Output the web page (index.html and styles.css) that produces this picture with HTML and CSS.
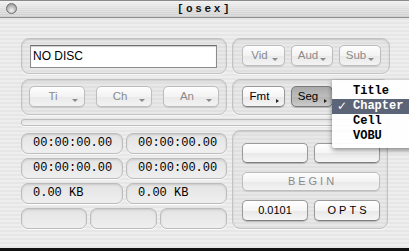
FILE: index.html
```html
<!DOCTYPE html>
<html>
<head>
<meta charset="utf-8">
<link rel="stylesheet" href="styles.css">
</head>
<body>
<div class="window">
  <div class="titlebar">
    <span class="close"></span>
    <span class="title">[osex]</span>
  </div>
  <div class="content">
    <div class="rows">
      <div class="group g-disc">
        <div class="textfield">NO DISC</div>
      </div>
      <div class="group g-btns">
        <div class="btn pop dis w43">Vid<i class="tri-d"></i></div>
        <div class="btn pop dis w42">Aud<i class="tri-d"></i></div>
        <div class="btn pop dis w42">Sub<i class="tri-d"></i></div>
      </div>
      <div class="group g-btns g-tca">
        <div class="btn pop dis w56">Ti<i class="tri-d"></i></div>
        <div class="btn pop dis w56">Ch<i class="tri-d"></i></div>
        <div class="btn pop dis w56">An<i class="tri-d"></i></div>
      </div>
      <div class="group g-btns">
        <div class="btn pop w43">Fmt<i class="tri-r"></i></div>
        <div class="btn pop pressed w42">Seg<i class="tri-r"></i></div>
      </div>
    </div>
    <div class="separator"></div>
    <div class="bottom">
      <div class="fields">
        <div class="field mono">00:00:00.00</div>
        <div class="field mono">00:00:00.00</div>
        <div class="field mono">00:00:00.00</div>
        <div class="field mono">00:00:00.00</div>
        <div class="field mono">0.00 KB</div>
        <div class="field mono">0.00 KB</div>
        <div class="field-row">
          <div class="field"></div>
          <div class="field"></div>
          <div class="field"></div>
        </div>
      </div>
      <div class="group g-actions">
        <div class="btn big"></div>
        <div class="btn big"></div>
        <div class="btn big wide dis spaced">BEGIN</div>
        <div class="btn big">0.0101</div>
        <div class="btn big spaced">OPTS</div>
      </div>
    </div>
  </div>
  <div class="menu">
    <div class="item">Title</div>
    <div class="item sel"><span class="check">✓</span>Chapter</div>
    <div class="item">Cell</div>
    <div class="item">VOBU</div>
  </div>
</div>
</body>
</html>
```
FILE: styles.css
```css
html, body {
  margin: 0;
  padding: 0;
}
body {
  width: 409px;
  height: 251px;
  overflow: hidden;
  font-family: "Liberation Sans", Arial, sans-serif;
}
.window {
  position: relative;
  width: 409px;
  height: 251px;
  box-sizing: border-box;
  border-bottom: 3px solid #111;
  background: repeating-linear-gradient(to bottom, #eeeeee 0 2px, #e6e6e6 2px 4px);
  overflow: hidden;
}
.titlebar {
  height: 16px;
  border-top: 1px solid #8a8a8a;
  border-bottom: 1px solid #8e8e8e;
  background:
    repeating-linear-gradient(to bottom, rgba(255,255,255,0.25) 0 1px, rgba(0,0,0,0) 1px 2px),
    linear-gradient(to bottom, #f0f0f0 0%, #dcdcdc 50%, #d0d0d0 100%);
  display: flex;
  align-items: center;
  justify-content: center;
  position: relative;
}
.close {
  position: absolute;
  left: 6px;
  top: 2px;
  width: 11px;
  height: 11px;
  box-sizing: border-box;
  border-radius: 50%;
  border: 1px solid #6e6e6e;
  background: radial-gradient(circle at 50% 70%, #f4f4f4 0%, #b8b8b8 55%, #8a8a8a 100%);
}
.title {
  font-family: "Liberation Mono", monospace;
  font-weight: bold;
  font-size: 11px;
  letter-spacing: 2.6px;
  color: #111;
}
.content {
  padding: 20px 21px 0 21px;
}
.rows {
  display: grid;
  grid-template-columns: 206px 158px;
  grid-auto-rows: 36px;
  column-gap: 5px;
  row-gap: 5px;
}
.group {
  box-sizing: border-box;
  border: 1px solid #c2c2c2;
  border-radius: 8px;
  background: rgba(0,0,0,0.025);
  box-shadow: inset 0 1px 2px rgba(0,0,0,0.12), 0 1px 0 rgba(255,255,255,0.7);
}
.g-disc {
  padding: 6px 9px 0 8px;
}
.textfield {
  height: 23px;
  box-sizing: border-box;
  border: 1px solid #8c8c8c;
  border-top-color: #6e6e6e;
  background: #fff;
  box-shadow: inset 0 1px 1px rgba(0,0,0,0.2);
  font-size: 12px;
  padding: 3px 2px;
  color: #000;
  line-height: 14px;
}
.g-btns {
  display: flex;
  align-items: flex-start;
  gap: 6px;
  padding: 6px 0 0 9px;
}
.g-tca {
  gap: 11px;
  padding-left: 7px;
}
.btn {
  position: relative;
  box-sizing: border-box;
  height: 21px;
  border: 1px solid #9a9a9a;
  border-bottom-color: #7e7e7e;
  border-radius: 5px;
  background: linear-gradient(to bottom, #ffffff 0%, #f5f5f5 50%, #e8e8e8 51%, #f6f6f6 100%);
  box-shadow: 0 1px 1px rgba(0,0,0,0.2);
  font-size: 11.5px;
  color: #000;
  display: flex;
  align-items: center;
  justify-content: center;
  line-height: 1;
}
.btn.dis {
  color: #8a8a8a;
  border-color: #bdbdbd;
  background: linear-gradient(to bottom, #fdfdfd 0%, #f3f3f3 50%, #e9e9e9 51%, #f3f3f3 100%);
  box-shadow: 0 1px 1px rgba(0,0,0,0.1);
}
.pop {
  padding-right: 8px;
}
.w43 { width: 43px; }
.w42 { width: 42px; }
.w56 { width: 56px; }
.pressed {
  background: linear-gradient(to bottom, #a9a9a9 0%, #bdbdbd 50%, #b2b2b2 51%, #cbcbcb 100%);
  border-color: #7a7a7a;
}
.tri-d {
  position: absolute;
  right: 6px;
  bottom: 4px;
  width: 0;
  height: 0;
  border-left: 3px solid transparent;
  border-right: 3px solid transparent;
  border-top: 3px solid #8a8a8a;
}
.tri-r {
  position: absolute;
  right: 5px;
  bottom: 3px;
  width: 0;
  height: 0;
  border-top: 2.5px solid transparent;
  border-bottom: 2.5px solid transparent;
  border-left: 3px solid #222;
}
.separator {
  margin-top: 4px;
  width: 368px;
  height: 7px;
  box-sizing: border-box;
  border: 1px solid #bcbcbc;
  border-radius: 3px;
  background: linear-gradient(to bottom, #e2e2e2, #f2f2f2);
  box-shadow: 0 1px 0 rgba(255,255,255,0.8);
}
.bottom {
  display: flex;
  gap: 5px;
  margin-top: 4px;
}
.fields {
  width: 206px;
  margin-top: 3px;
  display: grid;
  grid-template-columns: 102px 101px;
  grid-auto-rows: 21px;
  column-gap: 3px;
  row-gap: 4px;
}
.field-row {
  grid-column: 1 / 3;
  display: grid;
  grid-template-columns: 66px 67px 67px;
  column-gap: 3px;
}
.field {
  box-sizing: border-box;
  height: 21px;
  border: 1px solid #bcbcbc;
  border-radius: 7px;
  background: linear-gradient(to bottom, #e4e4e4, #efefef);
  box-shadow: inset 0 1px 2px rgba(0,0,0,0.12), 0 1px 0 rgba(255,255,255,0.8);
}
.mono {
  font-family: "Liberation Mono", "Courier New", monospace;
  font-size: 12px;
  color: #000;
  padding-left: 11px;
  line-height: 19px;
}
.g-actions {
  width: 158px;
  height: 99px;
  padding: 12px 0 0 9px;
  display: grid;
  grid-template-columns: 66px 66px;
  grid-template-rows: 20px 19px 21px;
  column-gap: 6px;
  row-gap: 9px;
}
.btn.big {
  height: auto;
  font-size: 11px;
}
.btn.wide {
  grid-column: 1 / 3;
}
.spaced {
  letter-spacing: 3px;
  padding-left: 3px;
}
.menu {
  position: absolute;
  left: 332px;
  top: 80px;
  width: 90px;
  height: 68px;
  box-sizing: border-box;
  padding-top: 4px;
  background: rgba(255,255,255,0.94);
  box-shadow: 0 2px 5px rgba(0,0,0,0.45);
  border-radius: 0 0 3px 3px;
  font-family: "Liberation Mono", "Courier New", monospace;
  font-weight: bold;
  font-size: 12px;
  color: #000;
}
.item {
  position: relative;
  height: 15px;
  line-height: 15px;
  padding-left: 21px;
}
.item.sel {
  background: #5c6477;
  color: #fff;
}
.check {
  position: absolute;
  left: 5px;
  top: 0;
  font-family: "DejaVu Sans", sans-serif;
  font-weight: bold;
  font-size: 12px;
}
```
